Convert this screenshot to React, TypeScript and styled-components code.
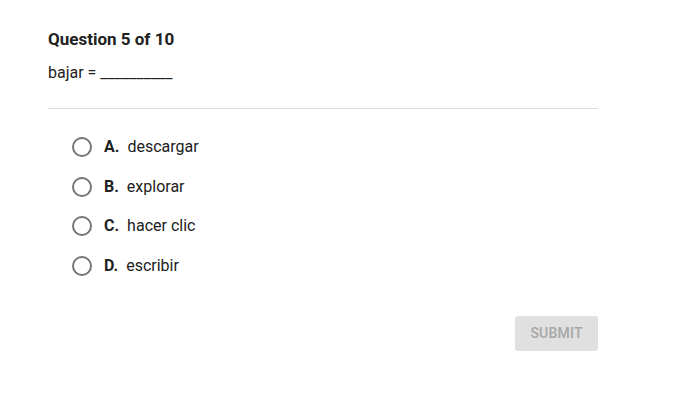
import React, { useState } from 'react';
import styled, { createGlobalStyle } from 'styled-components';

const GlobalStyle = createGlobalStyle`
  body {
    margin: 0;
    background: #fff;
    font-family: Roboto, "Liberation Sans", sans-serif;
    color: #212121;
  }
`;

// Question card
const Card = styled.div`
  width: 550px;
  padding: 29px 0 0 48px;
`;

const Title = styled.h2`
  margin: 0;
  font-size: 17px;
  font-weight: 700;
  line-height: 20px;
  color: #212121;
`;

const Prompt = styled.p`
  margin: 14px 0 0;
  font-size: 16px;
  line-height: 20px;
`;

const Divider = styled.hr`
  margin: 25px 0 0;
  border: none;
  border-top: 1px solid #dcdcdc;
`;

const Options = styled.div`
  display: flex;
  flex-direction: column;
  gap: 19.5px;
  padding: 28px 0 0 24px;
`;

const Option = styled.label`
  display: flex;
  align-items: center;
  gap: 12px;
  font-size: 16px;
  line-height: 20px;
  cursor: pointer;
`;

const Radio = styled.span<{ checked: boolean }>`
  box-sizing: border-box;
  width: 20px;
  height: 20px;
  border-radius: 50%;
  border: 2px solid #757575;
  display: flex;
  align-items: center;
  justify-content: center;

  &:after {
    content: '';
    width: 10px;
    height: 10px;
    border-radius: 50%;
    background: #757575;
    display: ${props => (props.checked ? 'block' : 'none')};
  }
`;

const Letter = styled.span`
  font-weight: 700;
  margin-right: -4px;
`;

const Footer = styled.div`
  display: flex;
  justify-content: flex-end;
  padding-top: 40px;
`;

const SubmitButton = styled.button`
  width: 83px;
  height: 35px;
  border: none;
  border-radius: 3px;
  background: #e0e0e0;
  color: #a6a6a6;
  font-family: Roboto, "Liberation Sans", sans-serif;
  font-size: 14px;
  font-weight: 500;
  letter-spacing: 0.2px;
  cursor: default;
`;

const choices = [
  { letter: 'A.', text: 'descargar' },
  { letter: 'B.', text: 'explorar' },
  { letter: 'C.', text: 'hacer clic' },
  { letter: 'D.', text: 'escribir' },
];

const App: React.FC = () => {
  const [selected, setSelected] = useState<number | null>(null);

  return (
    <>
      <GlobalStyle />
      <Card>
        <Title>Question 5 of 10</Title>
        <Prompt>bajar = __________</Prompt>
        <Divider />
        <Options>
          {choices.map((c, i) => (
            <Option key={c.letter} onClick={() => setSelected(i)}>
              <Radio checked={selected === i} />
              <Letter>{c.letter}</Letter>
              <span>{c.text}</span>
            </Option>
          ))}
        </Options>
        <Footer>
          <SubmitButton disabled={selected === null}>SUBMIT</SubmitButton>
        </Footer>
      </Card>
    </>
  );
};

export default App;
